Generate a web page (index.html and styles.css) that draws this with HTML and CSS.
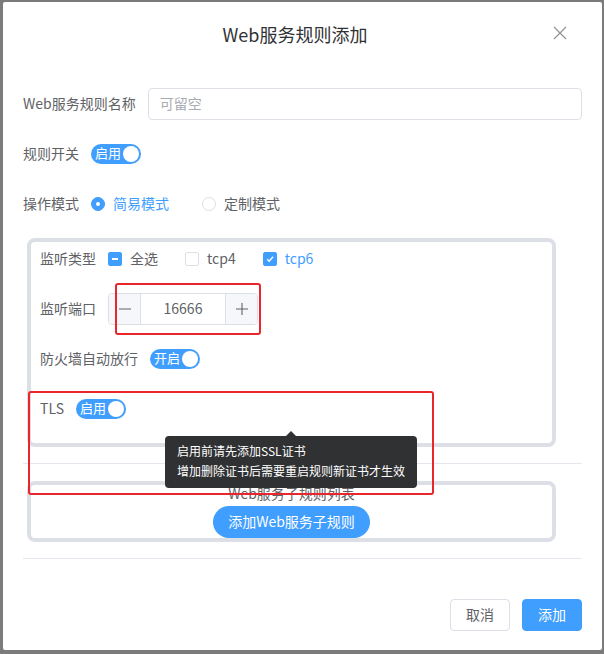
FILE: index.html
```html
<!DOCTYPE html>
<html lang="zh-CN">
<head>
    <meta charset="UTF-8">
    <meta name="viewport" content="width=device-width, initial-scale=1.0">
    <title>Web服务规则添加</title>
    <link rel="stylesheet" href="styles.css">
</head>
<body>
    <div class="dialog">
        <div class="dialog-header">
            <span class="dialog-title">Web服务规则添加</span>
            <span class="dialog-close">
                <svg width="14" height="14" viewBox="0 0 14 14"><path d="M1 1L13 13M13 1L1 13" stroke="#909399" stroke-width="1.2" fill="none"/></svg>
            </span>
        </div>

        <div class="dialog-body">
            <div class="form-item">
                <label class="form-label">Web服务规则名称</label>
                <input type="text" class="text-input" placeholder="可留空">
            </div>

            <div class="form-item">
                <label class="form-label">规则开关</label>
                <span class="switch"><span class="switch-text">启用</span><span class="switch-knob"></span></span>
            </div>

            <div class="form-item">
                <label class="form-label">操作模式</label>
                <span class="radio is-checked"><span class="radio-dot"></span><span class="option-text">简易模式</span></span>
                <span class="radio"><span class="radio-dot"></span><span class="option-text">定制模式</span></span>
            </div>

            <!-- listen settings -->
            <div class="group-box listen-box">
                <div class="form-item">
                    <label class="form-label">监听类型</label>
                    <span class="checkbox is-indeterminate"><span class="checkbox-box"><span class="checkbox-bar"></span></span><span class="option-text">全选</span></span>
                    <span class="checkbox"><span class="checkbox-box"></span><span class="option-text">tcp4</span></span>
                    <span class="checkbox is-checked"><span class="checkbox-box">
                        <svg width="10" height="10" viewBox="0 0 10 10"><path d="M2.2 5.2L4.2 7.2L8 2.8" stroke="#fff" stroke-width="1.4" fill="none"/></svg>
                    </span><span class="option-text">tcp6</span></span>
                </div>

                <div class="form-item">
                    <label class="form-label">监听端口</label>
                    <div class="number-input">
                        <span class="number-btn minus">
                            <svg width="12" height="12" viewBox="0 0 12 12"><path d="M0 6H12" stroke="#606266" stroke-width="1.1"/></svg>
                        </span>
                        <span class="number-value">16666</span>
                        <span class="number-btn plus">
                            <svg width="12" height="12" viewBox="0 0 12 12"><path d="M0 6H12M6 0V12" stroke="#606266" stroke-width="1.1"/></svg>
                        </span>
                    </div>
                </div>

                <div class="form-item">
                    <label class="form-label">防火墙自动放行</label>
                    <span class="switch"><span class="switch-text">开启</span><span class="switch-knob"></span></span>
                </div>

                <div class="form-item">
                    <label class="form-label">TLS</label>
                    <span class="switch"><span class="switch-text">启用</span><span class="switch-knob"></span></span>
                </div>
            </div>

            <div class="divider first"></div>

            <!-- sub rules -->
            <div class="group-box sub-box">
                <div class="sub-title">Web服务子规则列表</div>
                <button class="pill-button">添加Web服务子规则</button>
            </div>

            <div class="divider second"></div>
        </div>

        <div class="dialog-footer">
            <button class="btn">取消</button>
            <button class="btn btn-primary">添加</button>
        </div>

        <!-- tooltip over TLS row -->
        <div class="tooltip">
            启用前请先添加SSL证书<br>
            增加删除证书后需要重启规则新证书才生效
        </div>

        <!-- red annotation frames -->
        <div class="mark mark-port"></div>
        <div class="mark mark-tls"></div>
    </div>
</body>
</html>
```

FILE: styles.css
```css
* {
    margin: 0;
    padding: 0;
    box-sizing: border-box;
    font-family: "Noto Sans CJK SC", "Noto Sans", sans-serif;
}

body {
    background-color: #7b7b7b;
    width: 604px;
    height: 654px;
    overflow: hidden;
    padding: 2px 0 0 3px;
}

.dialog {
    position: relative;
    width: 599px;
    height: 648px;
    background-color: #fff;
    border-radius: 2px;
}

.dialog-header {
    padding: 20px 35px 11px 20px;
    text-align: center;
}

.dialog-title {
    font-size: 18px;
    line-height: 24px;
    color: #303133;
}

.dialog-close {
    position: absolute;
    top: 24px;
    right: 35px;
    width: 14px;
    height: 14px;
    display: flex;
}

.dialog-body {
    padding: 30px 20px;
}

.form-item {
    display: flex;
    align-items: center;
    height: 32px;
    margin-bottom: 18px;
    font-size: 14px;
    color: #606266;
}

/* CJK glyphs sit low in the line box, lift the text a touch */
.form-label,
.option-text {
    line-height: 28px;
    margin-bottom: 3px;
    white-space: nowrap;
}

.form-label {
    margin-right: 12px;
}

.text-input {
    flex: 1;
    height: 32px;
    padding: 0 11px 2px;
    border: 1px solid #dcdfe6;
    border-radius: 4px;
    font-size: 14px;
    color: #606266;
    outline: none;
}

.text-input::placeholder {
    color: #a8abb2;
}

/* switch */
.switch {
    display: inline-flex;
    align-items: center;
    justify-content: space-between;
    width: 50px;
    height: 20px;
    padding: 0 2px 0 4px;
    border-radius: 10px;
    background-color: #409eff;
}

.switch-text {
    font-size: 13px;
    line-height: 18px;
    margin-bottom: 2px;
    color: #fff;
}

.switch-knob {
    width: 16px;
    height: 16px;
    border-radius: 50%;
    background-color: #fff;
}

/* radio */
.radio {
    display: inline-flex;
    align-items: center;
    margin-right: 33px;
}

.radio-dot {
    width: 14px;
    height: 14px;
    margin-right: 8px;
    border: 1px solid #dcdfe6;
    border-radius: 50%;
    display: flex;
    align-items: center;
    justify-content: center;
}

.radio.is-checked {
    color: #409eff;
}

.radio.is-checked .radio-dot {
    background-color: #409eff;
    border-color: #409eff;
}

.radio.is-checked .radio-dot::after {
    content: "";
    width: 4px;
    height: 4px;
    border-radius: 50%;
    background-color: #fff;
}

/* checkbox */
.checkbox {
    display: inline-flex;
    align-items: center;
    margin-right: 27px;
}

.checkbox-box {
    width: 14px;
    height: 14px;
    margin-right: 8px;
    border: 1px solid #dcdfe6;
    border-radius: 2px;
    display: flex;
    align-items: center;
    justify-content: center;
}

.checkbox.is-indeterminate .checkbox-box,
.checkbox.is-checked .checkbox-box {
    background-color: #409eff;
    border-color: #409eff;
}

.checkbox-bar {
    width: 6px;
    height: 2px;
    background-color: #fff;
}

.checkbox.is-checked {
    color: #409eff;
}

/* grey framed groups */
.group-box {
    width: 529px;
    margin-left: 4px;
    border: 4px solid #dcdfe6;
    border-radius: 8px;
}

.listen-box {
    padding: 1px 9px 0;
}

.sub-box {
    text-align: center;
}

.sub-title {
    font-size: 14px;
    line-height: 16px;
    margin-bottom: 2px;
    color: #606266;
}

.pill-button {
    margin-top: 3px;
    height: 32px;
    padding: 0 15px 2px;
    border: none;
    border-radius: 16px;
    background-color: #409eff;
    color: #fff;
    font-size: 14px;
}

/* number input */
.number-input {
    display: flex;
    width: 150px;
    height: 32px;
    border: 1px solid #dcdfe6;
    border-radius: 4px;
    overflow: hidden;
}

.number-btn {
    width: 32px;
    display: flex;
    align-items: center;
    justify-content: center;
    background-color: #f5f7fa;
}

.number-btn.minus {
    border-right: 1px solid #dcdfe6;
}

.number-btn.plus {
    border-left: 1px solid #dcdfe6;
}

.number-value {
    flex: 1;
    text-align: center;
    line-height: 28px;
    color: #606266;
}

.divider {
    height: 1px;
    background-color: #e4e7ed;
}

.divider.first {
    margin: 16px 0 17px;
}

.divider.second {
    margin-top: 16px;
}

/* footer */
.dialog-footer {
    display: flex;
    justify-content: flex-end;
    gap: 12px;
    padding: 10px 20px 20px;
}

.btn {
    height: 32px;
    padding: 0 15px 2px;
    border: 1px solid #dcdfe6;
    border-radius: 4px;
    background-color: #fff;
    color: #606266;
    font-size: 14px;
}

.btn-primary {
    background-color: #409eff;
    border-color: #409eff;
    color: #fff;
}

/* tooltip */
.tooltip {
    position: absolute;
    left: 162px;
    top: 434px;
    width: 252px;
    padding: 5px 12px 7px;
    border-radius: 4px;
    background-color: #303133;
    color: #fff;
    font-size: 12px;
    line-height: 20px;
}

.tooltip::before {
    content: "";
    position: absolute;
    top: -5px;
    left: 121px;
    border-left: 5px solid transparent;
    border-right: 5px solid transparent;
    border-bottom: 5px solid #303133;
}

/* annotation frames */
.mark {
    position: absolute;
    border: 2px solid #e8262b;
    border-radius: 3px;
}

.mark-port {
    left: 112px;
    top: 281px;
    width: 146px;
    height: 52px;
}

.mark-tls {
    left: 25px;
    top: 389px;
    width: 406px;
    height: 104px;
}
```
